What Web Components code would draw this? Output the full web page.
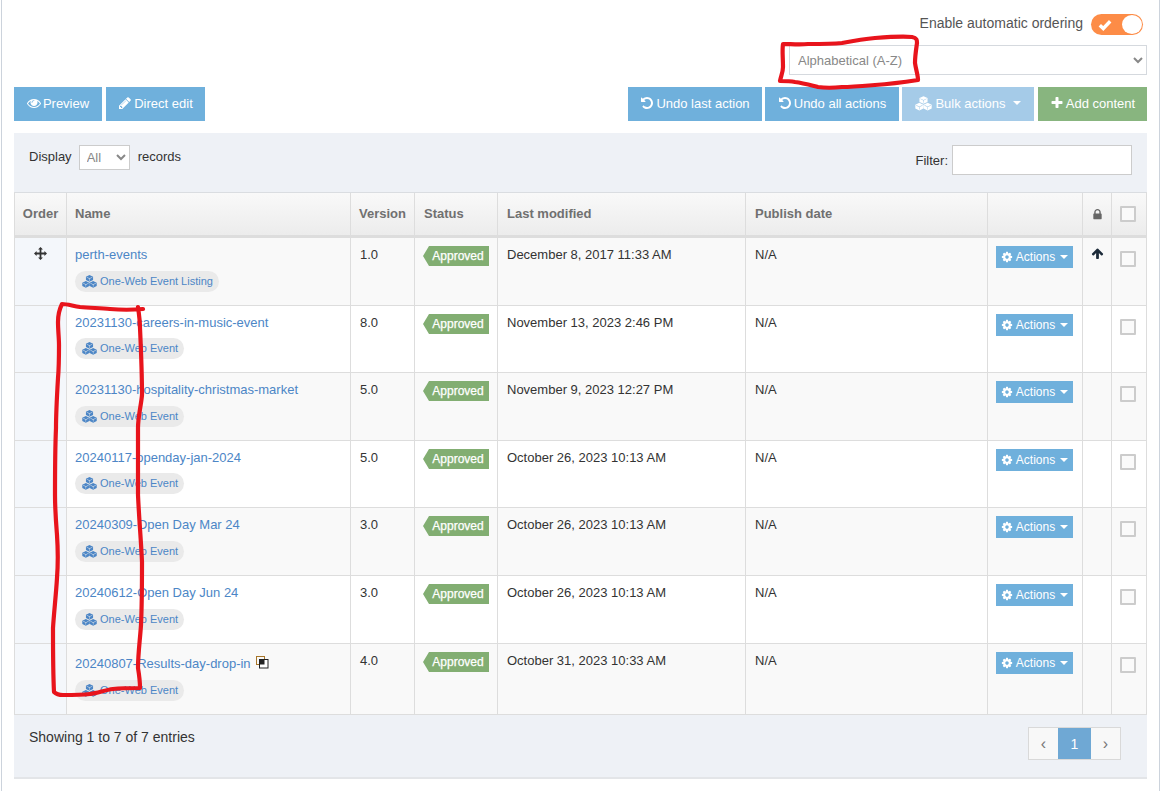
<!DOCTYPE html>
<html><head><meta charset="utf-8"><style>
html,body{margin:0;padding:0;background:#fff;}
body{font:14px "Liberation Sans",Arial,sans-serif;color:#333;}
</style></head><body>
<x-app>
  <x-toolbar-top></x-toolbar-top>
  <x-actions-bar>
    <x-btn slot="left" icon="eye" w="88">Preview</x-btn>
    <x-btn slot="left" icon="pencil" w="99">Direct edit</x-btn>
    <x-btn slot="right" icon="undo" w="134">Undo last action</x-btn>
    <x-btn slot="right" icon="undo" w="134">Undo all actions</x-btn>
    <x-btn slot="right" icon="cubes" w="132" caret light>Bulk actions</x-btn>
    <x-btn slot="right" icon="plus" w="109" green style="margin-left:1px">Add content</x-btn>
  </x-actions-bar>
  <x-panel>
    <x-row head h="44"></x-row>
    <x-row odd order name="perth-events" tag="One-Web Event Listing" ver="1.0" mod="December 8, 2017 11:33 AM" h="68" up></x-row>
    <x-row name="20231130-careers-in-music-event" tag="One-Web Event" ver="8.0" mod="November 13, 2023 2:46 PM" h="67"></x-row>
    <x-row odd name="20231130-hospitality-christmas-market" tag="One-Web Event" ver="5.0" mod="November 9, 2023 12:27 PM" h="68"></x-row>
    <x-row name="20240117-openday-jan-2024" tag="One-Web Event" ver="5.0" mod="October 26, 2023 10:13 AM" h="67"></x-row>
    <x-row odd name="20240309-Open Day Mar 24" tag="One-Web Event" ver="3.0" mod="October 26, 2023 10:13 AM" h="68"></x-row>
    <x-row name="20240612-Open Day Jun 24" tag="One-Web Event" ver="3.0" mod="October 26, 2023 10:13 AM" h="68"></x-row>
    <x-row odd copy name="20240807-Results-day-drop-in" tag="One-Web Event" ver="4.0" mod="October 31, 2023 10:33 AM" h="71"></x-row>
  </x-panel>
  <x-scribble></x-scribble>
</x-app>
<script>
const hex=(c,d)=>`M${c} ${d-3.6}L${c+3.8} ${d-1.8}V${d+1.8}L${c} ${d+3.6}L${c-3.8} ${d+1.8}V${d-1.8}Z`+
 `M${c-2.9} ${d-1.5}L${c} ${d-.1}L${c+2.9} ${d-1.5}L${c+2.9} ${d-.95}L${c+.25} ${d+.4}V${d+2.7}H${c-.25}V${d+.4}L${c-2.9} ${d-.95}Z`;
const ICONS={
eye:['0 0 1792 1792','M1664 960q-152-236-381-353 61 104 61 225 0 185-131.5 316.5t-316.5 131.5-316.5-131.5-131.5-316.5q0-121 61-225-229 117-381 353 133 205 333.5 326.5t434.5 121.5 434.5-121.5 333.5-326.5zm-720-384q0-20-14-34t-34-14q-125 0-214.5 89.5t-89.5 214.5q0 20 14 34t34 14 34-14 14-34q0-86 61-147t147-61q20 0 34-14t14-34zm848 384q0 34-20 69-140 230-376.5 368.5t-499.5 138.5-499.5-139-376.5-368q-20-35-20-69t20-69q140-229 376.5-368t499.5-139 499.5 139 376.5 368q20 35 20 69z'],
pencil:['0 0 1792 1792','M491 1536l91-91-235-235-91 91v107h128v128h107zm523-928q0-22-22-22-10 0-17 7l-542 542q-7 7-7 17 0 22 22 22 10 0 17-7l542-542q7-7 7-17zm-54-192l416 416-832 832h-416v-416zm683 96q0 53-37 90l-166 166-416-416 166-165q36-38 90-38 53 0 91 38l235 234q37 39 37 91z'],
undo:['0 0 1792 1792','M1664 896q0 156-61 298t-164 245-245 164-298 61q-172 0-327-72.5t-264-204.5q-7-10-6.5-22.5t8.5-20.5l137-138q10-9 25-9 16 2 23 12 73 95 179 147t225 52q104 0 198.5-40.5t163.5-109.5 109.5-163.5 40.5-198.5-40.5-198.5-109.5-163.5-163.5-109.5-198.5-40.5q-98 0-188 35.5t-160 101.5l137 138q31 30 14 69-17 40-59 40h-448q-26 0-45-19t-19-45v-448q0-42 40-59 39-17 69 14l130 129q107-101 244.5-156.5t284.5-55.5q156 0 298 61t245 164 164 245 61 298z'],
plus:['0 0 1792 1792','M1600 736v192q0 40-28 68t-68 28h-416v416q0 40-28 68t-68 28h-192q-40 0-68-28t-28-68v-416h-416q-40 0-68-28t-28-68v-192q0-40 28-68t68-28h416v-416q0-40 28-68t68-28h192q40 0 68 28t28 68v416h416q40 0 68 28t28 68z'],
cog:['0 0 1792 1792','M1152 896q0-106-75-181t-181-75-181 75-75 181 75 181 181 75 181-75 75-181zm512-109v222q0 12-8 23t-20 13l-185 28q-19 54-39 91 35 50 107 138 10 12 10 25t-9 23q-27 37-99 108t-94 71q-12 0-26-9l-138-108q-44 23-91 38-16 136-29 186-7 28-36 28h-222q-14 0-24.5-8.5t-11.5-21.5l-28-184q-49-16-90-37l-141 107q-10 9-25 9-14 0-25-11-126-114-165-168-7-10-7-23 0-12 8-23 15-21 51-66.5t54-70.5q-27-50-41-99l-183-27q-13-2-21-12.5t-8-23.5v-222q0-12 8-23t19-13l186-28q14-46 39-92-40-57-107-138-10-12-10-24 0-10 9-23 26-36 98.5-107.5t94.5-71.5q13 0 26 10l138 107q44-23 91-38 16-136 29-186 7-28 36-28h222q14 0 24.5 8.5t11.5 21.5l28 184q49 16 90 37l142-107q9-9 24-9 13 0 25 10 129 119 165 170 7 8 7 22 0 12-8 23-15 21-51 66.5t-54 70.5q26 50 41 98l183 28q13 2 21 12.5t8 23.5z'],
lock:['0 0 1792 1792','M640 768h512v-192q0-106-75-181t-181-75-181 75-75 181v192zm832 96v576q0 40-28 68t-68 28h-960q-40 0-68-28t-28-68v-576q0-40 28-68t68-28h32v-192q0-184 132-316t316-132 316 132 132 316v192h32q40 0 68 28t28 68z'],
up:['0 0 1792 1792','M1675 971q0 51-37 90l-75 75q-38 38-91 38-54 0-90-38l-294-293v704q0 52-37.5 84.5t-90.5 32.5h-128q-53 0-90.5-32.5t-37.5-84.5v-704l-294 293q-36 38-90 38t-90-38l-75-75q-38-38-38-90 0-53 38-91l651-651q35-37 90-37 54 0 91 37l651 651q37 39 37 91z'],
move:['0 0 16 16','M8 0 11 3.2H9.1V6.9H12.8V5L16 8 12.8 11V9.1H9.1V12.8H11L8 16 5 12.8H6.9V9.1H3.2V11L0 8 3.2 5V6.9H6.9V3.2H5Z'],
cubes:['0 0 16 14',hex(8,3.7)+hex(4.1,10)+hex(11.9,10)]
};
const def=(n,html)=>{customElements.define(n,class extends HTMLElement{connectedCallback(){if(this.shadowRoot)return;this.attachShadow({mode:'open'}).innerHTML=typeof html==='function'?html(this):html;}});};

def('x-icon',h=>{const i=ICONS[h.getAttribute('name')];const s=h.getAttribute('size')||14;
 return `<style>:host{display:inline-flex;flex:none;line-height:0}</style><svg width="${s}" height="${s}" viewBox="${i[0]}" fill="currentColor"><path fill-rule="evenodd" d="${i[1]}"/></svg>`;});

def('x-app',`<style>:host{display:block;box-sizing:border-box;width:1159px;height:791px;margin-left:1px;border-left:1px solid #ccd3dc;border-right:1px solid #ccd3dc;padding:0 12px 0 12px;position:relative;overflow:hidden}</style><slot></slot>`);

def('x-toolbar-top',`<style>
:host{display:flex;flex-direction:column;align-items:flex-end;padding-top:14px}
.t{display:flex;align-items:center;height:21px;gap:8px;color:#555;margin-right:4px;font-size:14px}
.t span{margin-top:-4px}
.sw{width:52px;height:21px;border-radius:11px;background:#fd8c47;display:flex;align-items:center;justify-content:space-between;padding:0 1px 0 7px;box-sizing:border-box}
.k{width:20px;height:19px;border-radius:50%;background:#fff}
select{display:block;margin-top:10px;width:358px;height:30px;box-sizing:border-box;border:1px solid #d5d9de;border-radius:0;background:#fff;color:#888;font:13px "Liberation Sans",Arial,sans-serif;padding:0 4px;outline:0}
</style>
<div class="t"><span>Enable automatic ordering</span><div class="sw"><svg width="14" height="12" viewBox="0 0 14 12"><path d="M1.800 6.200 5.300 9.500 12.200 2.300" fill="none" stroke="#fff" stroke-width="3.400"/></svg><div class="k"></div></div></div>
<select><option>Alphabetical (A-Z)</option></select>`);

def('x-actions-bar',`<style>:host{display:flex;justify-content:space-between;margin-top:12px;height:34px}
div{display:flex;gap:4px}.r{gap:3px}</style><div><slot name="left"></slot></div><div class="r"><slot name="right"></slot></div>`);

def('x-btn',h=>`<style>:host{display:flex;box-sizing:border-box;width:${h.getAttribute('w')}px;height:34px;padding-bottom:2px;align-items:center;justify-content:center;gap:${h.hasAttribute('caret')?3:2}px;color:#fff;font-size:13px;background:${h.hasAttribute('green')?'#88b57f':h.hasAttribute('light')?'#a5cbe8':'#6fb0dc'}}
.c{width:0;height:0;border:4.500px solid transparent;border-top-color:#fff;border-bottom:0;margin-left:4px}</style>
<x-icon name="${h.getAttribute('icon')}" size="${h.getAttribute('icon')==='cubes'?17:14}"></x-icon><slot></slot>${h.hasAttribute('caret')?'<span class="c"></span>':''}`);

def('x-panel',`<style>:host{display:block;margin-top:12px;background:#eef1f6;height:646px;border-bottom:2px solid #e3e5e8;box-sizing:border-box}
.top{display:flex;justify-content:space-between;align-items:flex-start;height:59px;padding:12px 15px 0 15px;box-sizing:border-box}
.l{display:flex;align-items:center;font-size:13px;height:25px;color:#333}
.l span{margin-top:-2px}
select{width:51px;height:25px;margin:0 8px 0 7px;padding-left:3px;box-sizing:border-box;border:1px solid #ccc;background:#fff;color:#888;font:13px "Liberation Sans",Arial,sans-serif;border-radius:0;outline:0}
.f{display:flex;align-items:center;gap:4px;font-size:13px;height:30px}
input{width:180px;height:30px;box-sizing:border-box;border:1px solid #ccc;background:#fff;outline:0;margin:0}
.tb{border-top:1px solid #dadde1;border-left:1px solid #ddd;border-right:1px solid #ddd;border-bottom:1px solid #ddd}
.bot{display:flex;justify-content:space-between;padding:12px 26px 0 15px}
.s{font-size:14px;line-height:20px}
.pg{display:flex;height:33px;box-sizing:border-box;border:1px solid #d9d9d9;background:#f8f8f8;color:#777;font-size:16px}
.pg span{display:flex;align-items:center;justify-content:center;width:29px}
.pg .a{width:33px;background:#6fa8d4;color:#fff;font-size:14px}
</style>
<div class="top"><div class="l"><span>Display</span><select><option>All</option></select><span>records</span></div><div class="f"><span>Filter:</span><input></div></div>
<div class="tb"><slot></slot></div>
<div class="bot"><div class="s">Showing 1 to 7 of 7 entries</div><div class="pg"><span>‹</span><span class="a">1</span><span>›</span></div></div>`);

const CHK=`<span class="cb"></span>`;
def('x-row',h=>{
 const short=h.getAttribute('h')==='67';
 const base=`<style>
:host{display:grid;grid-template-columns:52px 284px 64px 83px 248px 242px 95px 29px 34px;box-sizing:border-box;height:${h.getAttribute('h')}px;background:${h.hasAttribute('odd')?'#f9f9f9':'#fff'};border-top:1px solid #ddd;font-size:13px;color:#333}
:host([head]){background:linear-gradient(#f9f9f9,#ececec);border-top:0;border-bottom:2px solid #ddd;font-weight:bold;color:#707070;line-height:1}
.c{border-right:1px solid #ddd;box-sizing:border-box;padding:9px 8px 0 9px;min-width:0;white-space:nowrap;line-height:16px}
.c:last-child{border-right:0}
.n{padding-left:8px}
${h.hasAttribute('copy')?'.n{padding-top:12px}':''}
:host([head]) .c{display:flex;align-items:center;padding:0 8px 0 9px}
:host([head]) .n,:host([head]) .v{padding-left:8px}
.o{background:#f4f7fb;text-align:center;padding:9px 0 0}
:host([head]) .o{background:none;justify-content:center;padding:0}
a{color:#4c86c6;text-decoration:none}
.tag{display:inline-flex;align-items:center;gap:3px;margin-top:${short?7:8}px;height:21px;padding:0 6px 0 7px;background:#eaeaea;border-radius:11px;color:#4c86c6;font-size:11px;line-height:1}
.t8{padding:8px 0 0 8px}
.lab{display:inline-flex;align-items:center;justify-content:center;width:66px;height:20px;background:#82ae72;color:#fff;font-size:12px;clip-path:polygon(0 50%,6px 0,100% 0,100% 100%,6px 100%);padding-left:4px;box-sizing:border-box;-webkit-text-stroke:.25px #fff}
.act{display:inline-flex;align-items:center;justify-content:center;gap:3px;width:77px;height:22px;background:#6fb0dc;color:#fff;font-size:12px}
.car{width:0;height:0;border:4px solid transparent;border-top-color:#fff;border-bottom:0;margin-left:2px}
.cb{display:block;width:16px;height:16px;box-sizing:border-box;border:2px solid #ccc;background:#fafafa;border-radius:1px;margin:0 auto}
.ck{padding:13px 2px 0 0}
:host([head]) .ck{justify-content:center;padding:0 2px 0 0}
.cp{display:inline-block;vertical-align:-1px;margin-left:5px}
</style>`;
 if(h.hasAttribute('head')) return base+['Order','Name','Version','Status','Last modified','Publish date'].map((t,i)=>`<div class="c ${i==0?'o':i==1?'n':i==2?'v':''}">${t}</div>`).join('')+`<div class="c"></div><div class="c" style="justify-content:center;padding:0;color:#666"><x-icon name="lock" size="13"></x-icon></div><div class="c ck">${CHK}</div>`;
 const g=n=>h.getAttribute(n);
 return base+`<div class="c o">${h.hasAttribute('order')?'<x-icon name="move" size="13" style="color:#333"></x-icon>':''}</div>
<div class="c n"><a href="#">${g('name')}</a>${h.hasAttribute('copy')?'<svg class="cp" width="13" height="13" viewBox="0 0 13 13"><rect x="0.500" y="0.500" width="8" height="8" fill="none" stroke="#a8762a"/><rect x="3.500" y="3.500" width="8.500" height="8.500" fill="#fff" stroke="#222"/><rect x="3.500" y="3.500" width="5" height="5" fill="#222"/></svg>':''}<br><span class="tag"><x-icon name="cubes" size="15"></x-icon>${g('tag')}</span></div>
<div class="c">${g('ver')}</div>
<div class="c t8"><span class="lab">Approved</span></div>
<div class="c">${g('mod')}</div>
<div class="c">N/A</div>
<div class="c t8"><span class="act"><x-icon name="cog" size="12"></x-icon>Actions<span class="car"></span></span></div>
<div class="c" style="text-align:center;color:#1d2b3a;padding:9px 0 0">${h.hasAttribute('up')?'<x-icon name="up" size="13"></x-icon>':''}</div>
<div class="c ck">${CHK}</div>`;
});

def('x-scribble',`<style>:host{position:absolute;left:-2px;top:0;width:1165px;height:791px;pointer-events:none}</style>
<svg width="1165" height="791" viewBox="0 0 1165 791" fill="none" stroke="#e8141c" stroke-width="4.200" stroke-linecap="round" stroke-linejoin="round">
<path d="M780 81C781 76 783 72 783 67C783 58 782 50 783 44C790 44 800 45 808 44C820 44 832 44 842 43C853 41 865 39 875 38C888 37 902 36 912 37C917 38 917 40 917 43C916 50 915 56 915 63C916 70 918 75 918 80C905 82 890 84 875 85C863 86 852 87 842 87C833 88 825 88 818 87C810 85 803 83 795 82C790 81 785 81 780 81Z"/>
<path d="M143 309C132 310 121 310 110 309C100 308 90 308 80 307C73 306 67 304 62 304C59 310 58 316 58 322C58 330 59 338 59 345C59 356 59 367 58 378C57 395 56 412 56 428C55 450 55 472 55 495C55 510 56 522 57 535C58 550 58 565 57 578C56 595 54 612 53 628C53 650 53 672 54 692C56 694 59 695 63 695C72 695 81 695 90 694C98 693 105 690 113 689C122 688 132 688 140 688C140 680 139 674 138 668C138 654 140 640 141 625C142 604 142 583 142 562C141 540 139 518 138 495C138 473 138 450 138 428C138 417 141 406 142 395C142 373 141 350 140 328C140 321 139 314 138 307"/>
</svg>`);
</script>
</body></html>
